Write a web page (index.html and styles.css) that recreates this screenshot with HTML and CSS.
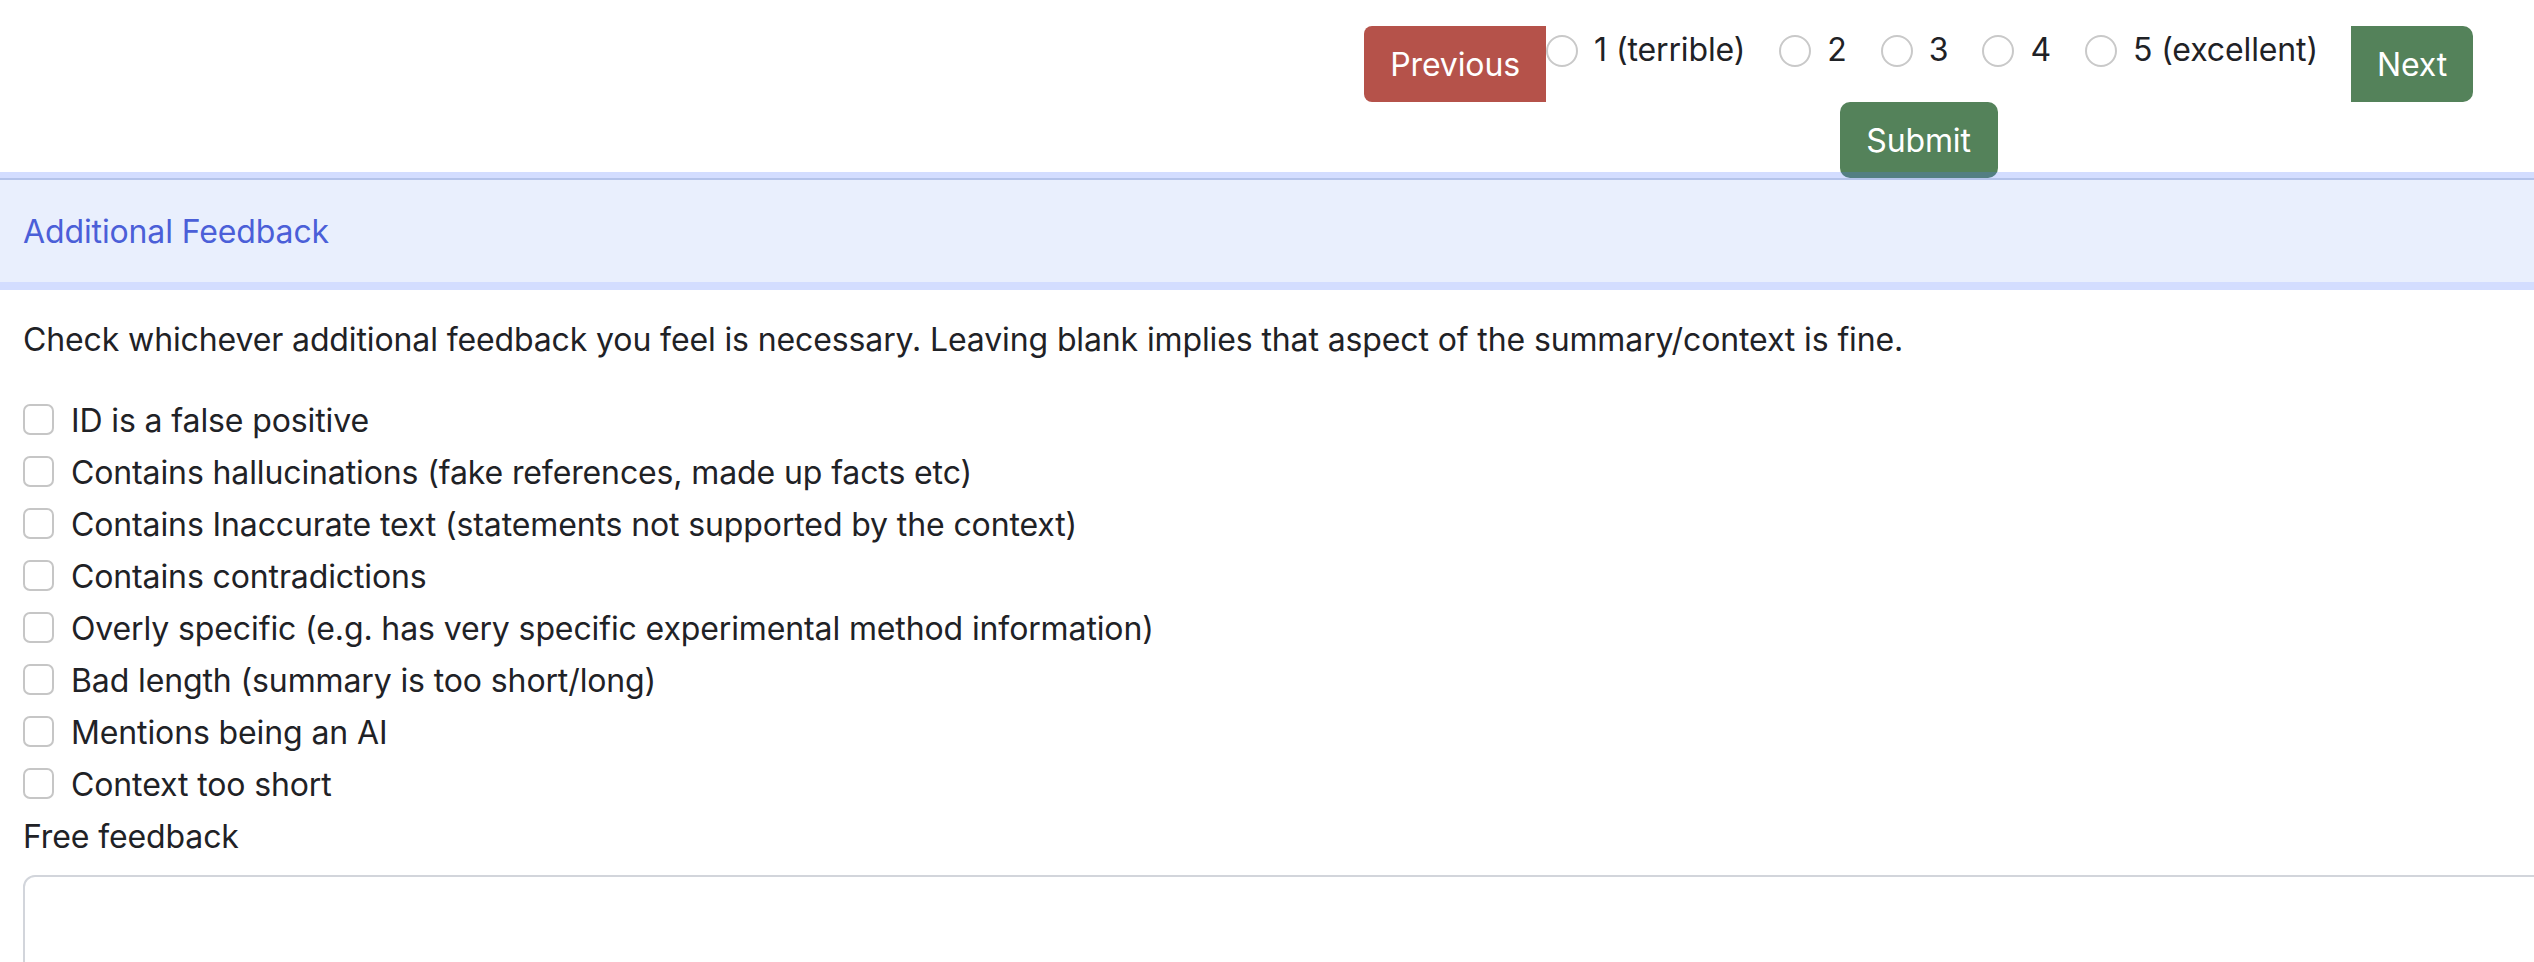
FILE: index.html
```html
<!DOCTYPE html>
<html lang="en">
<head>
<meta charset="utf-8">
<title>Feedback</title>
<link rel="stylesheet" href="styles.css">
</head>
<body>
<div class="topbar">
  <div class="nav">
    <div class="nav-row">
      <button class="btn btn-prev">Previous</button>
      <div class="rating">
        <label class="radio-item"><input type="radio" name="score" class="radio"><span>1 (terrible)</span></label>
        <label class="radio-item"><input type="radio" name="score" class="radio"><span>2</span></label>
        <label class="radio-item"><input type="radio" name="score" class="radio"><span>3</span></label>
        <label class="radio-item"><input type="radio" name="score" class="radio"><span>4</span></label>
        <label class="radio-item"><input type="radio" name="score" class="radio"><span>5 (excellent)</span></label>
      </div>
      <button class="btn btn-next">Next</button>
    </div>
    <button class="btn btn-submit">Submit</button>
  </div>
</div>
<section class="section">
  <div class="section-header">Additional Feedback</div>
</section>
<div class="content">
  <p class="intro">Check whichever additional feedback you feel is necessary. Leaving blank implies that aspect of the summary/context is fine.</p>
  <label class="check-row"><input type="checkbox" class="check"><span>ID is a false positive</span></label>
  <label class="check-row"><input type="checkbox" class="check"><span>Contains hallucinations (fake references, made up facts etc)</span></label>
  <label class="check-row"><input type="checkbox" class="check"><span>Contains Inaccurate text (statements not supported by the context)</span></label>
  <label class="check-row"><input type="checkbox" class="check"><span>Contains contradictions</span></label>
  <label class="check-row"><input type="checkbox" class="check"><span>Overly specific (e.g. has very specific experimental method information)</span></label>
  <label class="check-row"><input type="checkbox" class="check"><span>Bad length (summary is too short/long)</span></label>
  <label class="check-row"><input type="checkbox" class="check"><span>Mentions being an AI</span></label>
  <label class="check-row"><input type="checkbox" class="check"><span>Context too short</span></label>
  <label class="field-label" for="free">Free feedback</label>
  <textarea id="free" class="textarea"></textarea>
</div>
</body>
</html>
```

FILE: styles.css
```css
html {
  overflow: hidden;
}
body {
  margin: 0;
  font-family: Inter, "Noto Sans", sans-serif;
  font-size: 32px;
  line-height: 48px;
  letter-spacing: -0.12px;
  color: #1f2226;
  background: #fff;
}
.topbar {
  display: flex;
  justify-content: flex-end;
  padding: 26px 61px 0 0;
}
.nav {
  display: flex;
  flex-direction: column;
  align-items: center;
}
.nav-row {
  display: flex;
  align-items: flex-start;
}
.btn {
  display: flex;
  align-items: center;
  justify-content: center;
  height: 76px;
  border: none;
  padding: 0;
  font-family: inherit;
  font-size: 32px;
  letter-spacing: -0.12px;
  color: #fff;
}
.btn-prev {
  width: 182px;
  background: #b5524a;
  border-radius: 8px 0 0 8px;
}
.btn-next {
  width: 122px;
  background: #54825a;
  border-radius: 0 10px 10px 0;
}
.btn-submit {
  width: 158px;
  background: #54825a;
  border-radius: 10px;
}
.rating {
  display: flex;
}
.radio-item {
  display: flex;
  align-items: flex-start;
  gap: 16px;
  margin-right: 34px;
}
.radio-item:last-child {
  margin-right: 33px;
}
.radio {
  appearance: none;
  margin: 9px 0 0 0;
  width: 32px;
  height: 32px;
  border: 2px solid #c9c9c9;
  border-radius: 50%;
  background: #fff;
  box-sizing: border-box;
}
.section {
  position: relative;
  margin-top: -6px;
  border-top: 6px solid rgba(80, 118, 255, 0.25);
  border-bottom: 8px solid rgba(80, 118, 255, 0.25);
}
.section-header {
  height: 104px;
  border-top: 2px solid #b4c3ea;
  background: #e9effd;
  box-sizing: border-box;
  display: flex;
  align-items: center;
  padding: 2px 0 0 23px;
  color: #4b5fd8;
}
.content {
  padding: 26px 0 0 23px;
}
.intro {
  margin: 0 0 33px;
}
.check-row {
  display: flex;
  align-items: flex-start;
  gap: 17px;
  min-height: 48px;
  margin-bottom: 4px;
}
.check {
  appearance: none;
  margin: 7px 0 0 0;
  width: 31px;
  height: 31px;
  border: 2px solid #c6c6c6;
  border-radius: 7px;
  background: #fff;
  box-sizing: border-box;
  flex: none;
}
.field-label {
  display: block;
  margin-bottom: 14px;
}
.textarea {
  display: block;
  width: 2700px;
  height: 200px;
  border: 2px solid #d2d5db;
  border-radius: 12px;
  box-sizing: border-box;
  font-family: inherit;
  font-size: 32px;
  resize: none;
}
```
